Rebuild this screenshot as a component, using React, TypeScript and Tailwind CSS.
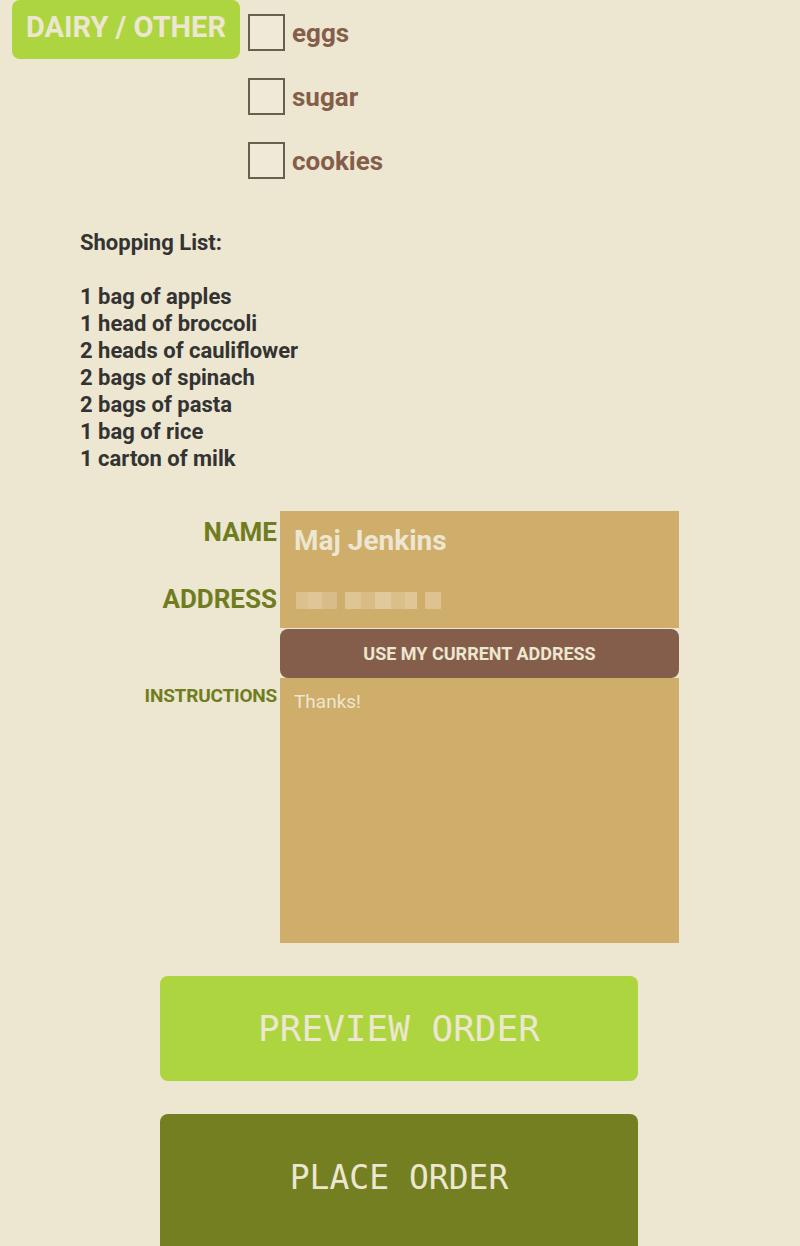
import React from 'react';

const items = ['eggs', 'sugar', 'cookies'];

const list = [
  '1 bag of apples',
  '1 head of broccoli',
  '2 heads of cauliflower',
  '2 bags of spinach',
  '2 bags of pasta',
  '1 bag of rice',
  '1 carton of milk',
];

// pixelated (redacted) address
const blur = [
  { w: 12, c: '#dcc08e' },
  { w: 14, c: '#e0c697' },
  { w: 15, c: '#d9bd88' },
  { w: 8, c: 'transparent' },
  { w: 16, c: '#dfc593' },
  { w: 14, c: '#d8bb85' },
  { w: 16, c: '#e2c99b' },
  { w: 14, c: '#dbbf8b' },
  { w: 12, c: '#e0c696' },
  { w: 8, c: 'transparent' },
  { w: 16, c: '#dec391' },
];

export default function App() {
  return (
    <div className="min-h-[1246px] bg-[#ede6d0] font-['Roboto',sans-serif] overflow-hidden">
      <div className="flex">
        <div className="ml-3 w-[228px] h-[59px] rounded-[8px] bg-[#add53f] flex items-center justify-center">
          <span className="text-[29px] font-bold text-[#ede6d0] leading-none -mt-[5px]">DAIRY / OTHER</span>
        </div>
        <div className="ml-2 pt-[14px] flex flex-col gap-[27px]">
          {items.map((it) => (
            <div key={it} className="flex items-center h-[37px]">
              <div className="w-[37px] h-[37px] border-2 border-[#67604f] bg-[#efe9d7]" />
              <span className="ml-[7px] text-[26px] font-bold text-[#845e4b] leading-none">{it}</span>
            </div>
          ))}
        </div>
      </div>

      <div className="pl-[80px] mt-[50px] text-[22px] leading-[27px] font-bold text-[#333333]">
        <div>Shopping List:</div>
        <div className="h-[27px]" />
        {list.map((l) => (
          <div key={l}>{l}</div>
        ))}
      </div>

      <div className="mt-[39px] grid grid-cols-[280px_399px]">
        <div className="pt-[7px] pr-[3px] flex flex-col items-end text-[#6f7d1f] font-bold text-[26px] leading-[28px]">
          <span>NAME</span>
          <span className="mt-[39px]">ADDRESS</span>
        </div>
        <div className="h-[117px] bg-[#cfad6b] pt-[14px] pl-[14px]">
          <div className="text-[28px] leading-[32px] font-bold text-[#ede6d0]">Maj Jenkins</div>
          <div className="mt-[35px] flex h-[17px] pl-[2px]">
            {blur.map((b, i) => (
              <div key={i} className="h-full" style={{ width: b.w, background: b.c }} />
            ))}
          </div>
        </div>

        <div />
        <button className="mt-[1px] h-[49px] rounded-[8px] bg-[#845e4b] text-[#ede6d0] text-[18px] font-bold">
          USE MY CURRENT ADDRESS
        </button>

        <div className="pt-[8px] pr-[3px] text-right text-[#6f7d1f] font-bold text-[19px] leading-[20px] tracking-[-0.2px]">
          INSTRUCTIONS
        </div>
        <div className="h-[265px] bg-[#cfad6b] pt-[14px] pl-[14px] text-[19px] leading-[20px] text-[#ede6d0]">
          Thanks!
        </div>
      </div>

      <div className="ml-[160px] w-[478px] mt-[33px] flex flex-col gap-[33px]">
        <button className="h-[105px] rounded-[8px] bg-[#add53f] text-[#ede6d0] font-['DejaVu_Sans_Mono',monospace] text-[36px]">
          PREVIEW ORDER
        </button>
        <button className="h-[140px] rounded-[8px] bg-[#737f20] text-[#ede6d0] font-['DejaVu_Sans_Mono',monospace] text-[33px] pb-[12px]">
          PLACE ORDER
        </button>
      </div>
    </div>
  );
}
